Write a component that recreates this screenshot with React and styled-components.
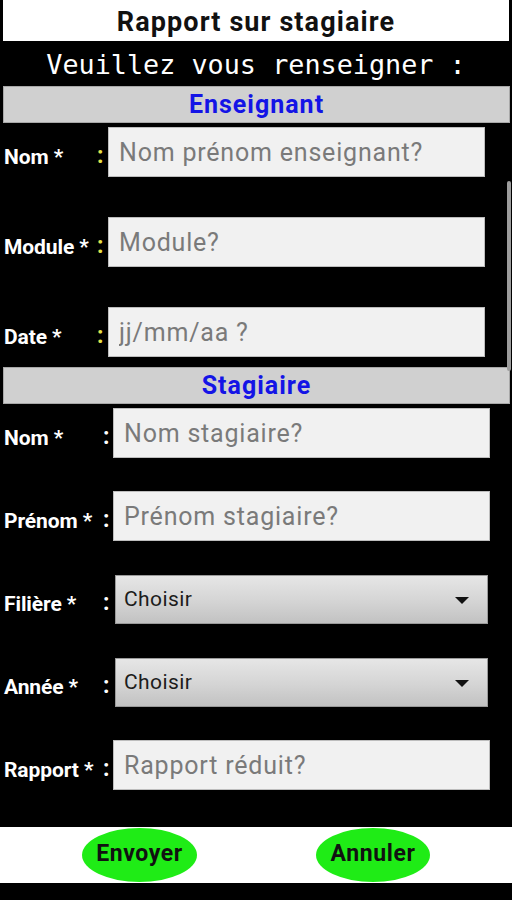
import React from 'react';
import styled, { createGlobalStyle } from 'styled-components';

const GlobalStyle = createGlobalStyle`
  html, body {
    margin: 0;
    padding: 0;
    background: #000;
  }
  * {
    box-sizing: border-box;
  }
`

const Page = styled.div`
  position: relative;
  width: 512px;
  height: 900px;
  background: #000;
  display: flex;
  flex-direction: column;
  font-family: Roboto, "Liberation Sans", sans-serif;
  overflow: hidden;
`

const Header = styled.div`
  margin: 0 3px;
  height: 41px;
  background: #fff;
  display: flex;
  align-items: center;
  justify-content: center;
  font-size: 27px;
  font-weight: 700;
  color: #111;
  letter-spacing: 1.1px;
  padding-top: 3px;
`

const Subtitle = styled.div`
  height: 45px;
  display: flex;
  align-items: center;
  justify-content: center;
  font-family: "DejaVu Sans Mono", "Liberation Mono", monospace;
  font-size: 26.8px;
  color: #fff;
  padding-top: 1px;
`

const SectionBar = styled.div`
  margin: 0 2px 0 3px;
  height: 37px;
  background: #d0d0d0;
  border: 1px solid #a8a8a8;
  display: flex;
  align-items: center;
  justify-content: center;
  font-size: 25px;
  font-weight: 700;
  color: #1414e6;
  letter-spacing: 1px;
`

const Section = styled.div`
  display: flex;
  flex-direction: column;
  gap: ${p => p.$gap}px;
  padding: ${p => p.$top}px 0 ${p => p.$bottom}px 4px;
`

const Row = styled.div`
  display: grid;
  grid-template-columns: ${p => p.$label}px ${p => p.$colon}px ${p => p.$field}px;
  align-items: center;
  height: 50px;
`

const Label = styled.span`
  color: #fff;
  font-size: 21px;
  font-weight: 700;
  letter-spacing: -0.1px;
  padding-top: 9px;
  white-space: nowrap;
`

const Colon = styled.span`
  color: ${p => p.$color};
  font-size: 23px;
  font-weight: 700;
  padding-top: 6px;
`

const Field = styled.input`
  height: 50px;
  width: 100%;
  border: 1px solid #bdbdbd;
  background: #f1f1f1;
  font-family: Roboto, "Liberation Sans", sans-serif;
  font-size: 25px;
  letter-spacing: 0.8px;
  padding: 0 0 0 10px;
  outline: none;

  &::placeholder {
    color: #7a7a7a;
  }
`

const Select = styled.div`
  height: 49px;
  margin-left: 2px;
  width: calc(100% - 4px);
  border: 1px solid #9a9a9a;
  background: linear-gradient(#e6e6e6, #d4d4d4 55%, #c2c2c2);
  display: flex;
  align-items: center;
  justify-content: space-between;
  padding: 0 18px 0 8px;
  font-size: 21px;
  letter-spacing: 0.4px;
  color: #1c1c1c;
`

const Arrow = styled.span`
  width: 0;
  height: 0;
  border-left: 7px solid transparent;
  border-right: 7px solid transparent;
  border-top: 7px solid #111;
  margin-top: 2px;
`

const Scroll = styled.div`
  position: absolute;
  right: 1px;
  top: 181px;
  width: 4px;
  height: 190px;
  background: #9c9c9c;
  border-radius: 2px;
`

const Footer = styled.div`
  margin-top: 37px;
  height: 56px;
  background: #fff;
  display: flex;
  align-items: center;
  padding-left: 82px;
  gap: 119px;
`

const Button = styled.button`
  width: ${p => p.$w}px;
  height: 54px;
  border: none;
  border-radius: 50%;
  background: #1fec16;
  font-family: Roboto, "Liberation Sans", sans-serif;
  font-size: 23px;
  font-weight: 700;
  color: #111;
  letter-spacing: 0.6px;
  padding: 0 0 4px;
`

const teacherRows = [
  { label: 'Nom *', placeholder: 'Nom prénom enseignant?' },
  { label: 'Module *', placeholder: 'Module?' },
  { label: 'Date *', placeholder: 'jj/mm/aa ?' },
];

const traineeRows = [
  { label: 'Nom *', placeholder: 'Nom stagiaire?' },
  { label: 'Prénom *', placeholder: 'Prénom stagiaire?' },
  { label: 'Filière *', select: true },
  { label: 'Année *', select: true },
  { label: 'Rapport *', placeholder: 'Rapport réduit?' },
];

const App = () => (
  <Page>
    <GlobalStyle />
    <Header>Rapport sur stagiaire</Header>
    <Subtitle>Veuillez vous renseigner :</Subtitle>
    <SectionBar>Enseignant</SectionBar>
    <Section $gap={40} $top={4} $bottom={10}>
      {teacherRows.map(r => (
        <Row key={r.placeholder} $label={93} $colon={11} $field={377}>
          <Label>{r.label}</Label>
          <Colon $color="#e6e24a">:</Colon>
          <Field placeholder={r.placeholder} />
        </Row>
      ))}
    </Section>
    <SectionBar>Stagiaire</SectionBar>
    <Section $gap={33} $top={4} $bottom={0}>
      {traineeRows.map(r => (
        <Row key={r.label} $label={99} $colon={10} $field={377}>
          <Label>{r.label}</Label>
          <Colon $color="#fff">:</Colon>
          {r.select ? (
            <Select>
              Choisir
              <Arrow />
            </Select>
          ) : (
            <Field placeholder={r.placeholder} />
          )}
        </Row>
      ))}
    </Section>
    <Footer>
      <Button $w={115}>Envoyer</Button>
      <Button $w={114}>Annuler</Button>
    </Footer>
    <Scroll />
  </Page>
);

export default App;
